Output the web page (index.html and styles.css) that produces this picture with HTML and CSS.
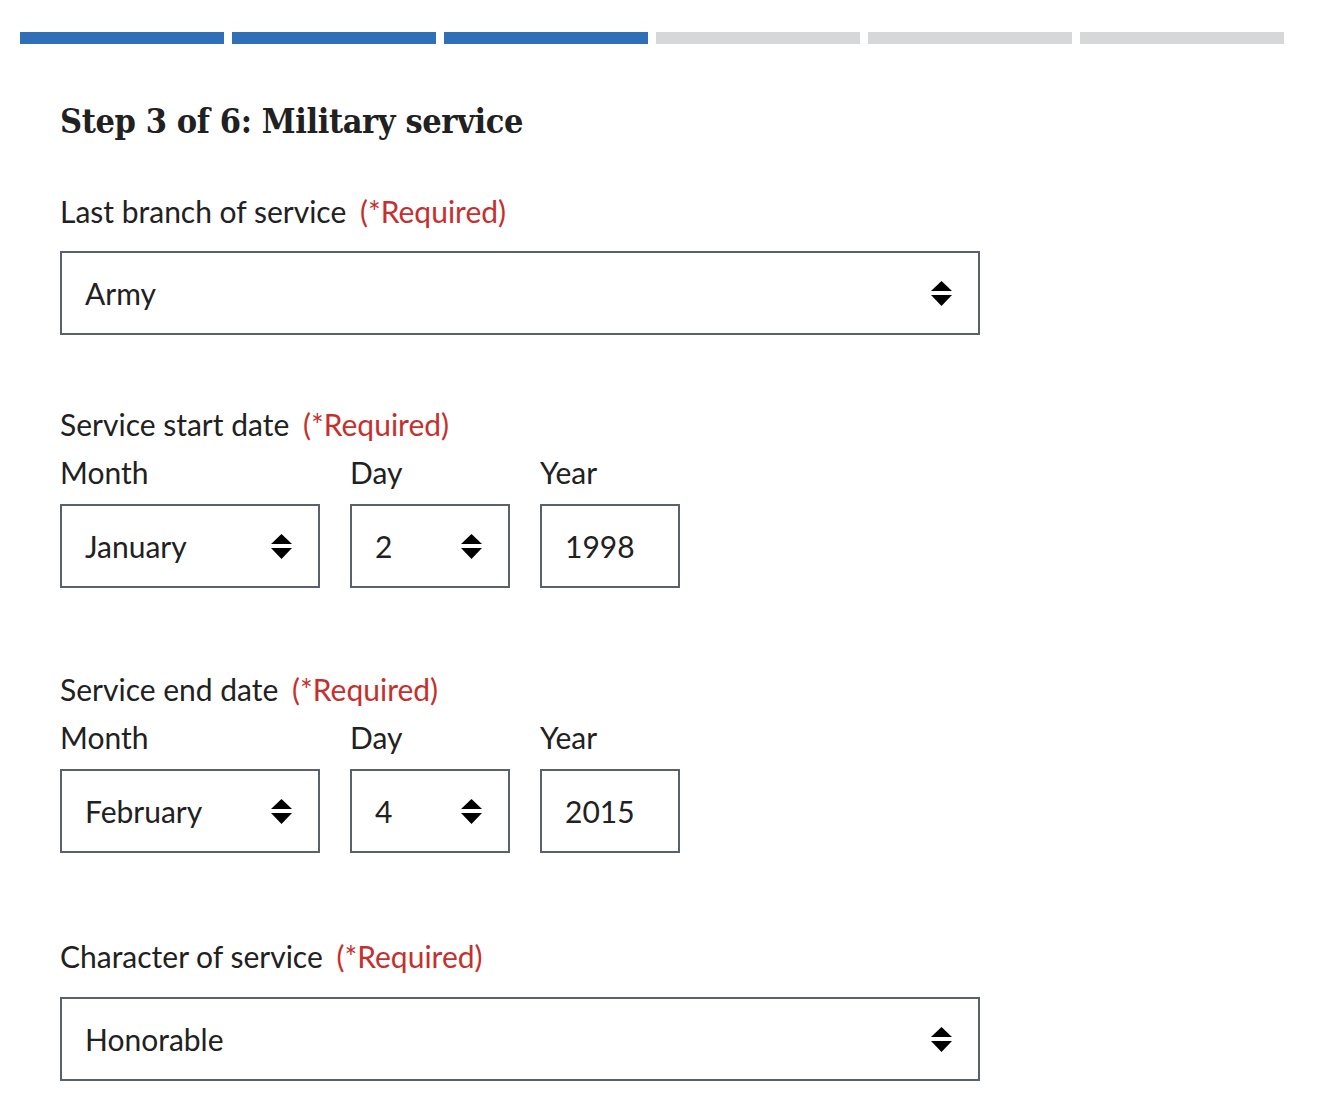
FILE: index.html
```html
<!DOCTYPE html>
<html lang="en">
<head>
<meta charset="utf-8">
<title>Step 3 of 6: Military service</title>
<link rel="stylesheet" href="styles.css">
</head>
<body>
<div class="progress">
  <div class="seg done"></div>
  <div class="seg done"></div>
  <div class="seg done"></div>
  <div class="seg"></div>
  <div class="seg"></div>
  <div class="seg"></div>
</div>
<main class="content">
  <h2 class="title">Step 3 of 6: Military service</h2>

  <div class="field">
    <label class="label">Last branch of service <span class="req">(*Required)</span></label>
    <div class="select wide">
      <span class="value">Army</span>
      <svg class="arrows" width="21" height="25" viewBox="0 0 21 25"><polygon points="10.5,0 21,10 0,10"/><polygon points="0,14 21,14 10.5,25"/></svg>
    </div>
  </div>

  <fieldset class="date first">
    <legend class="label">Service start date <span class="req">(*Required)</span></legend>
    <div class="date-row">
      <div class="part month">
        <div class="sublabel">Month</div>
        <div class="select"><span class="value">January</span><svg class="arrows" width="21" height="25" viewBox="0 0 21 25"><polygon points="10.5,0 21,10 0,10"/><polygon points="0,14 21,14 10.5,25"/></svg></div>
      </div>
      <div class="part day">
        <div class="sublabel">Day</div>
        <div class="select"><span class="value">2</span><svg class="arrows" width="21" height="25" viewBox="0 0 21 25"><polygon points="10.5,0 21,10 0,10"/><polygon points="0,14 21,14 10.5,25"/></svg></div>
      </div>
      <div class="part year">
        <div class="sublabel">Year</div>
        <div class="select"><span class="value">1998</span></div>
      </div>
    </div>
  </fieldset>

  <fieldset class="date second">
    <legend class="label">Service end date <span class="req">(*Required)</span></legend>
    <div class="date-row">
      <div class="part month">
        <div class="sublabel">Month</div>
        <div class="select"><span class="value">February</span><svg class="arrows" width="21" height="25" viewBox="0 0 21 25"><polygon points="10.5,0 21,10 0,10"/><polygon points="0,14 21,14 10.5,25"/></svg></div>
      </div>
      <div class="part day">
        <div class="sublabel">Day</div>
        <div class="select"><span class="value">4</span><svg class="arrows" width="21" height="25" viewBox="0 0 21 25"><polygon points="10.5,0 21,10 0,10"/><polygon points="0,14 21,14 10.5,25"/></svg></div>
      </div>
      <div class="part year">
        <div class="sublabel">Year</div>
        <div class="select"><span class="value">2015</span></div>
      </div>
    </div>
  </fieldset>

  <div class="field last">
    <label class="label">Character of service <span class="req">(*Required)</span></label>
    <div class="select wide">
      <span class="value">Honorable</span>
      <svg class="arrows" width="21" height="25" viewBox="0 0 21 25"><polygon points="10.5,0 21,10 0,10"/><polygon points="0,14 21,14 10.5,25"/></svg>
    </div>
  </div>
</main>
</body>
</html>
```
FILE: styles.css
```css
html, body {
  margin: 0;
  padding: 0;
  background: #ffffff;
}
body {
  font-family: "Lato", "Liberation Sans", sans-serif;
  color: #212121;
}
.progress {
  display: flex;
  gap: 8px;
  margin: 32px 36px 0 20px;
}
.seg {
  flex: 1;
  height: 12px;
  background: #d6d7d9;
}
.seg.done {
  background: #2f6fb8;
}
.content {
  padding: 0 60px;
}
.title {
  font-family: "DejaVu Serif Condensed", "DejaVu Serif", "Liberation Serif", serif;
  font-stretch: condensed;
  font-weight: bold;
  font-size: 34px;
  line-height: 40px;
  margin: 57px 0 0 0;
  color: #212121;
  letter-spacing: -0.4px;
}
.label {
  display: block;
  font-size: 30px;
  line-height: 36px;
  color: #212121;
  padding: 0;
}
.req {
  color: #c5302e;
  margin-left: 6px;
}
.field {
  margin-top: 52px;
}
.field .label {
  margin-bottom: 22px;
}
.select {
  box-sizing: border-box;
  height: 84px;
  border: 2px solid #5b616b;
  display: flex;
  align-items: center;
  justify-content: space-between;
  padding: 0 26px 0 23px;
  font-size: 30px;
  line-height: 36px;
}
.select.wide {
  width: 920px;
}
.arrows {
  fill: #000;
  flex: none;
}
fieldset.date {
  border: 0;
  padding: 0;
  margin: 71px 0 0 0;
  min-width: 0;
}
fieldset.date.second {
  margin-top: 83px;
}
fieldset.date .label {
  float: left;
  width: 100%;
  margin-bottom: 12px;
}
.date-row {
  clear: both;
  display: flex;
  gap: 30px;
}
.sublabel {
  font-size: 30px;
  line-height: 36px;
  margin-bottom: 14px;
}
.part.month { width: 260px; }
.part.day { width: 160px; }
.part.year { width: 140px; }
.field.last {
  margin-top: 85px;
}
.field.last .label {
  margin-bottom: 23px;
}
```
